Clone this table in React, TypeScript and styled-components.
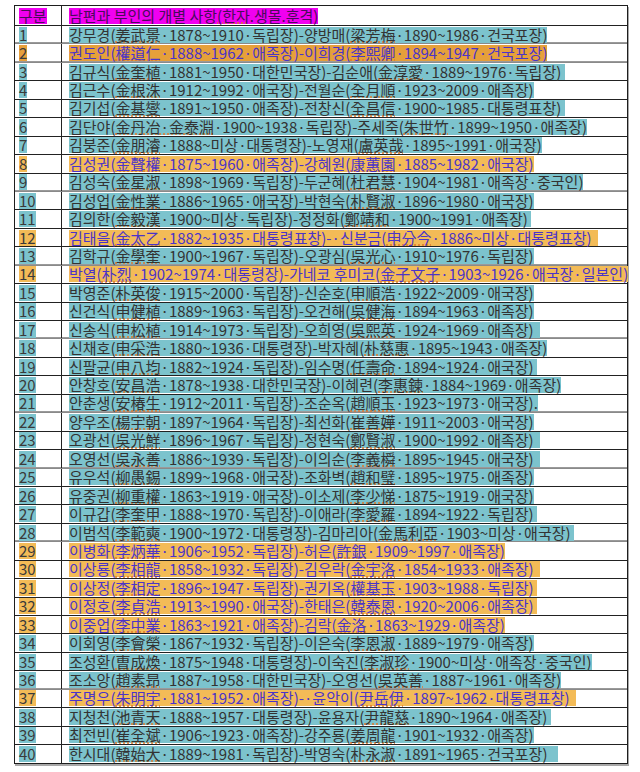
import React from 'react'
import styled, { createGlobalStyle, css } from 'styled-components'

type Tone = 'teal' | 'orange' | 'amber'

interface Entry {
  no: number
  text: string
  tone: Tone
  tail?: number
  soft?: boolean
}

const rows: Entry[] = [
  { no: 1, text: '강무경(姜武景·1878~1910·독립장)-양방매(梁芳梅·1890~1986·건국포장)', tone: 'teal' },
  { no: 2, text: '권도인(權道仁·1888~1962·애족장)-이희경(李熙卿·1894~1947·건국포장)', tone: 'amber', soft: true },
  { no: 3, text: '김규식(金奎植·1881~1950·대한민국장)-김순애(金淳愛·1889~1976·독립장)', tone: 'teal', tail: 1, soft: true },
  { no: 4, text: '김근수(金根洙·1912~1992·애국장)-전월순(全月順·1923~2009·애족장)', tone: 'teal' },
  { no: 5, text: '김기섭(金基燮·1891~1950·애족장)-전창신(全昌信·1900~1985·대통령표창)', tone: 'teal', tail: 1 },
  { no: 6, text: '김단야(金丹冶·金泰淵·1900~1938·독립장)-주세죽(朱世竹·1899~1950·애족장)', tone: 'teal' },
  { no: 7, text: '김붕준(金朋濬·1888~미상·대통령장)-노영재(盧英哉·1895~1991·애국장)', tone: 'teal' },
  { no: 8, text: '김성권(金聲權·1875~1960·애족장)-강혜원(康蕙園·1885~1982·애국장)', tone: 'orange' },
  { no: 9, text: '김성숙(金星淑·1898~1969·독립장)-두군혜(杜君慧·1904~1981·애족장·중국인)', tone: 'teal' },
  { no: 10, text: '김성업(金性業·1886~1965·애국장)-박현숙(朴賢淑·1896~1980·애국장)', tone: 'teal', soft: true },
  { no: 11, text: '김의한(金毅漢·1900~미상·독립장)-정정화(鄭靖和·1900~1991·애족장)', tone: 'teal', tail: 1 },
  { no: 12, text: '김태을(金太乙·1882~1935·대통령표창)-·신분금(申分今·1886~미상·대통령표창)', tone: 'orange', tail: 2 },
  { no: 13, text: '김학규(金學奎·1900~1967·독립장)-오광심(吳光心·1910~1976·독립장)', tone: 'teal' },
  { no: 14, text: '박열(朴烈·1902~1974·대통령장)-가네코 후미코(金子文子·1903~1926·애국장·일본인)', tone: 'orange', soft: true },
  { no: 15, text: '박영준(朴英俊·1915~2000·독립장)-신순호(申順浩·1922~2009·애국장)', tone: 'teal' },
  { no: 16, text: '신건식(申健植·1889~1963·독립장)-오건해(吳健海·1894~1963·애족장)', tone: 'teal' },
  { no: 17, text: '신송식(申松植·1914~1973·독립장)-오희영(吳熙英·1924~1969·애족장)', tone: 'teal', tail: 2 },
  { no: 18, text: '신채호(申采浩·1880~1936·대통령장)-박자혜(朴慈惠·1895~1943·애족장)', tone: 'teal', soft: true },
  { no: 19, text: '신팔균(申八均·1882~1924·독립장)-임수명(任壽命·1894~1924·애국장)', tone: 'teal', tail: 1 },
  { no: 20, text: '안창호(安昌浩·1878~1938·대한민국장)-이혜련(李惠鍊·1884~1969·애족장)', tone: 'teal' },
  { no: 21, text: '안춘생(安椿生·1912~2011·독립장)-조순옥(趙順玉·1923~1973·애국장).', tone: 'teal' },
  { no: 22, text: '양우조(楊宇朝·1897~1964·독립장)-최선화(崔善嬅·1911~2003·애국장)', tone: 'teal', soft: true },
  { no: 23, text: '오광선(吳光鮮·1896~1967·독립장)-정현숙(鄭賢淑·1900~1992·애족장)', tone: 'teal', tail: 2 },
  { no: 24, text: '오영선(吳永善·1886~1939·독립장)-이의순(李義橓·1895~1945·애국장)', tone: 'teal', tail: 2 },
  { no: 25, text: '유우석(柳愚錫·1899~1968·애국장)-조화벽(趙和璧·1895~1975·애족장)', tone: 'teal', soft: true },
  { no: 26, text: '유중권(柳重權·1863~1919·애국장)-이소제(李少悌·1875~1919·애국장)', tone: 'teal' },
  { no: 27, text: '이규갑(李奎甲·1888~1970·독립장)-이애라(李愛羅·1894~1922·독립장)', tone: 'teal', tail: 1 },
  { no: 28, text: '이범석(李範奭·1900~1972·대통령장)-김마리아(金馬利亞·1903~미상·애국장)', tone: 'teal', tail: 1 },
  { no: 29, text: '이병화(李炳華·1906~1952·독립장)-허은(許銀·1909~1997·애족장)', tone: 'orange', soft: true },
  { no: 30, text: '이상룡(李相龍·1858~1932·독립장)-김우락(金宇洛·1854~1933·애족장)', tone: 'orange', tail: 2 },
  { no: 31, text: '이상정(李相定·1896~1947·독립장)-권기옥(權基玉·1903~1988·독립장)', tone: 'orange', tail: 1 },
  { no: 32, text: '이정호(李貞浩·1913~1990·애국장)-한태은(韓泰恩·1920~2006·애족장)', tone: 'orange', tail: 1 },
  { no: 33, text: '이중업(李中業·1863~1921·애족장)-김락(金洛·1863~1929·애족장)', tone: 'orange' },
  { no: 34, text: '이회영(李會榮·1867~1932·독립장)-이은숙(李恩淑·1889~1979·애족장)', tone: 'teal' },
  { no: 35, text: '조성환(曺成煥·1875~1948·대통령장)-이숙진(李淑珍·1900~미상·애족장·중국인)', tone: 'teal' },
  { no: 36, text: '조소앙(趙素昻·1887~1958·대한민국장)-오영선(吳英善·1887~1961·애족장)', tone: 'teal' },
  { no: 37, text: '주명우(朱明宇·1881~1952·애족장)-·윤악이(尹岳伊·1897~1962·대통령표창)', tone: 'orange', tail: 2, soft: true },
  { no: 38, text: '지청천(池青天·1888~1957·대통령장)-윤용자(尹龍慈·1890~1964·애족장)', tone: 'teal', tail: 1 },
  { no: 39, text: '최전빈(崔全斌·1906~1923·애족장)-강주룡(姜周龍·1901~1932·애족장)', tone: 'teal' },
  { no: 40, text: '한시대(韓始大·1889~1981·독립장)-박영숙(朴永淑·1891~1965·건국포장)', tone: 'teal', tail: 3 },
]

// hanja runs get the dotted spell-check underline
const splitHanja = (text: string) => text.split(/([\u4e00-\u9fff\uf900-\ufaff·]*[\u4e00-\u9fff\uf900-\ufaff]+)/)

const isHanja = (s: string) => /[\u4e00-\u9fff\uf900-\ufaff]/.test(s)

export default function App() {
  return (
    <>
      <GlobalStyle />
      <Page>
        <Sheet>
          <HeadRow>
            <NumCell>
              <Mark $tone="head">구분</Mark>
            </NumCell>
            <TextCell>
              <Mark $tone="head">
                남편과 부인의 개별 사항<Dots>(한자</Dots>.생몰.훈격)
              </Mark>
            </TextCell>
          </HeadRow>
          {rows.map((r) => (
            <Row key={r.no} $soft={r.soft}>
              <NumCell>
                <Mark $tone={r.tone} $num>
                  {r.no}
                </Mark>
              </NumCell>
              <TextCell>
                <Mark $tone={r.tone}>
                  {splitHanja(r.text).map((part, i) =>
                    isHanja(part) ? <Dots key={i}>{part}</Dots> : <React.Fragment key={i}>{part}</React.Fragment>
                  )}
                  {' '.repeat(r.tail ?? 0)}
                </Mark>
              </TextCell>
            </Row>
          ))}
        </Sheet>
      </Page>
    </>
  )
}

const GlobalStyle = createGlobalStyle`
  body {
    margin: 0;
    background: #ffffff;
    font-family: "Noto Sans CJK KR", "Noto Sans", sans-serif;
  }
`

const Page = styled.div`
  width: 640px;
  height: 772px;
  padding: 5px 0 0 14px;
  box-sizing: border-box;
`

const Sheet = styled.div`
  width: 612px;
  border: 1px solid #1e1e1e;
  box-shadow: 1px 2px 0 #a8a8a8;
`

const HeadRow = styled.div`
  display: grid;
  grid-template-columns: 47px 1fr;
  height: 19px;
`

const Row = styled.div<{ $soft?: boolean }>`
  display: grid;
  grid-template-columns: 47px 1fr;
  height: 18.45px;
  box-sizing: border-box;
  border-top: 1px solid #222;
  ${(p) =>
    p.$soft &&
    css`
      border-top-color: #8a8a8a;
      box-shadow: 0 -1px 0 #9a9a9a;
    `}
`

const NumCell = styled.div`
  border-right: 1px solid #222;
  padding-left: 4px;
  display: flex;
  align-items: center;
`

const TextCell = styled.div`
  padding-left: 7px;
  display: flex;
  align-items: center;
  min-width: 0;
`

const tones = {
  head: { bg: '#f000f0', fg: '#4a0a5a' },
  teal: { bg: '#7cc3cd', fg: '#333333' },
  orange: { bg: '#f3bb57', fg: '#4b34c8' },
  amber: { bg: '#e6a03a', fg: '#4b34c8' },
}

const Mark = styled.span<{ $tone: keyof typeof tones; $num?: boolean }>`
  display: inline-block;
  height: 16px;
  line-height: 16px;
  font-size: 15px;
  white-space: pre;
  background: ${(p) => tones[p.$tone].bg};
  color: ${(p) => (p.$num ? '#3a3a3a' : tones[p.$tone].fg)};
`

const Dots = styled.span`
  text-decoration: underline dotted #e0782a;
  text-underline-offset: 1px;
`
